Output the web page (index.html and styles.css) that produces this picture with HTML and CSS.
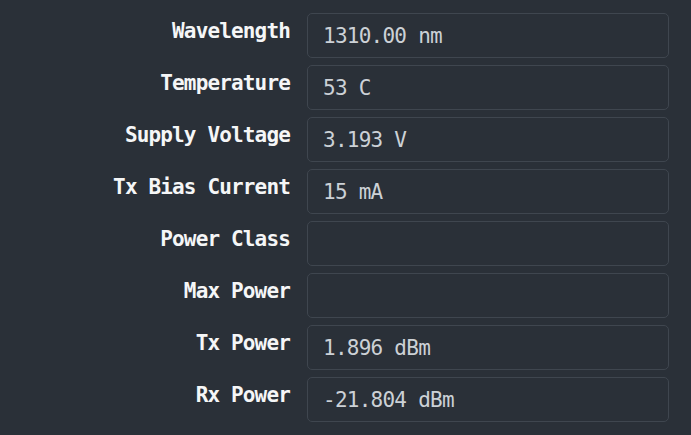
FILE: index.html
```html
<!DOCTYPE html>
<html>
<head>
<meta charset="utf-8">
<link rel="stylesheet" href="styles.css">
</head>
<body>
<div class="form">
  <div class="label">Wavelength</div><div class="field">1310.00 nm</div>
  <div class="label">Temperature</div><div class="field">53 C</div>
  <div class="label">Supply Voltage</div><div class="field">3.193 V</div>
  <div class="label">Tx Bias Current</div><div class="field">15 mA</div>
  <div class="label">Power Class</div><div class="field"></div>
  <div class="label">Max Power</div><div class="field"></div>
  <div class="label">Tx Power</div><div class="field">1.896 dBm</div>
  <div class="label">Rx Power</div><div class="field">-21.804 dBm</div>
</div>
</body>
</html>
```
FILE: styles.css
```css
html, body {
  margin: 0;
  background: #2a3038;
}
body {
  width: 691px;
  height: 435px;
  overflow: hidden;
  font-family: "DejaVu Sans Mono", monospace;
}
.form {
  display: grid;
  grid-template-columns: 290px 362px;
  grid-auto-rows: 45px;
  column-gap: 17px;
  row-gap: 7px;
  padding-top: 13px;
}
.label {
  text-align: right;
  font-weight: bold;
  font-size: 21px;
  line-height: 24px;
  letter-spacing: -0.85px;
  color: #f5f6f7;
  padding-top: 6px;
}
.field {
  box-sizing: border-box;
  border: 1px solid #3f464f;
  border-radius: 5px;
  padding: 0 15px;
  display: flex;
  align-items: center;
  font-size: 21px;
  line-height: 24px;
  letter-spacing: -0.75px;
  color: #ccd1d6;
}
```
